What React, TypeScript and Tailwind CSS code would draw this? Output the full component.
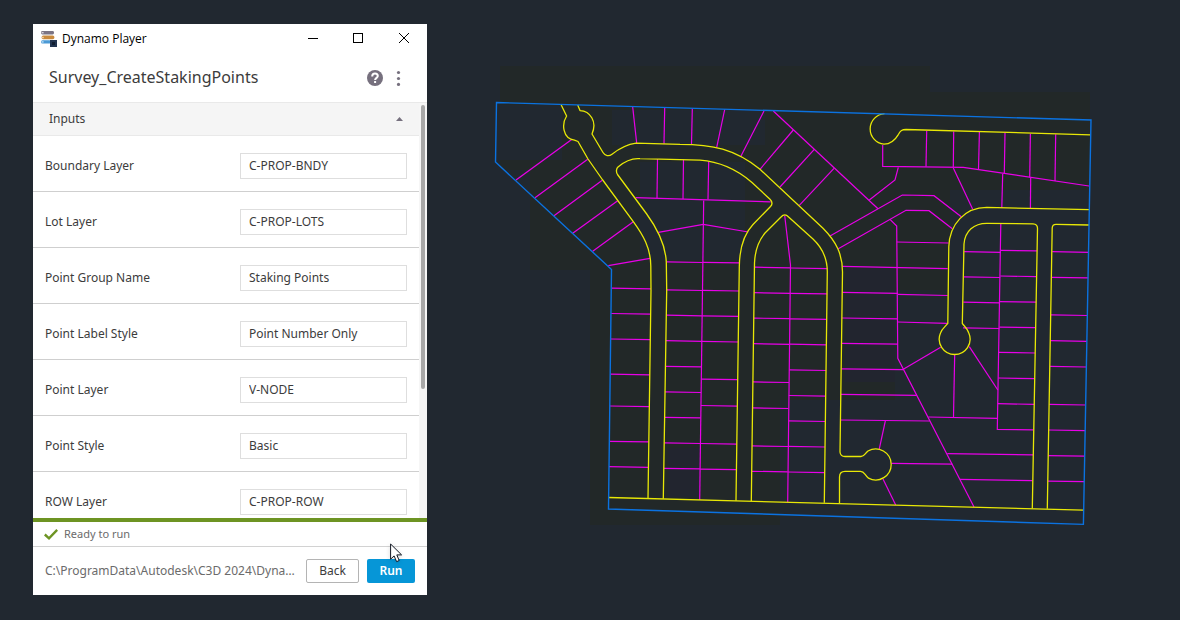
import { useState } from "react";

type Segment = [number, number, number, number];

const inputs = [
  { id: "boundary-layer", label: "Boundary Layer", value: "C-PROP-BNDY" },
  { id: "lot-layer", label: "Lot Layer", value: "C-PROP-LOTS" },
  { id: "point-group", label: "Point Group Name", value: "Staking Points" },
  { id: "label-style", label: "Point Label Style", value: "Point Number Only" },
  { id: "point-layer", label: "Point Layer", value: "V-NODE" },
  { id: "point-style", label: "Point Style", value: "Basic" },
  { id: "row-layer", label: "ROW Layer", value: "C-PROP-ROW" },
];

/* Lot rows: x of both sides at y = 290, lean of the block, and the y of each lot line. */
const lotRows: { left: number; right: number; lean: number; ys: number[] }[] = [
  { left: 611.5, right: 651, lean: 0.0142, ys: [288.5, 313.8, 339.3, 374.5, 406.3, 441.6, 467] },
  { left: 666.5, right: 702.5, lean: 0.0142, ys: [262.2, 290.2, 315.5, 341, 366.6, 392.2, 417.6, 443.2, 468.6] },
  { left: 702.5, right: 739, lean: 0.0142, ys: [262.6, 290.7, 316.1, 341.7, 379.4, 405.8, 443.8, 469.4] },
  { left: 754.3, right: 790.3, lean: 0.0142, ys: [267.5, 293, 318.4, 344, 382.2, 408.2, 446.2, 471.6] },
  { left: 790.3, right: 827.3, lean: 0.0142, ys: [268.3, 293.6, 319.1, 344.5, 370.2, 395.8, 421.2, 446.7, 472.3] },
  { left: 963.6, right: 1000, lean: 0.016, ys: [252, 277.2, 302.5, 328.2] },
  { left: 1000, right: 1036.5, lean: 0.019, ys: [250.6, 276.3, 301.9, 327.4, 352.7, 378.3, 404] },
  { left: 1051.5, right: 1088, lean: 0.019, ys: [252, 277.6, 315.2, 341, 366.7, 404.7, 430.3, 455.9, 481.4] },
];

const lotLines: Segment[] = [
  [571.7, 139.5, 516, 180],
  [587.7, 159.3, 535, 197.7],
  [602.3, 180.3, 554, 215.7],
  [617.7, 200.7, 572.7, 233.3],
  [633.3, 221.7, 592.7, 251.3],
  [650, 258.3, 608.3, 265.7],
  [632.7, 107, 636.7, 143.3],
  [664.7, 108, 664, 143.7],
  [692.3, 108.7, 691.5, 144.3],
  [724.7, 109.5, 716.7, 147.3],
  [764, 111, 741, 156],
  [773.3, 111, 878, 208.7],
  [793.3, 130, 760, 169.3],
  [814.3, 149.3, 780, 187],
  [834, 168.3, 799.3, 205.3],
  [657.5, 159, 657, 198.3],
  [683.5, 159.5, 683, 199],
  [708.7, 161.3, 708, 199.5],
  [635.7, 197.7, 770.7, 201.8],
  [703.7, 200.5, 699.7, 500],
  [926.7, 130.7, 926, 166.7],
  [953.7, 131.5, 953.3, 167.3],
  [979.4, 132, 978.5, 170],
  [1005, 133, 1004.3, 173.5],
  [1030.4, 133.7, 1029.7, 177.5],
  [1055.7, 134.3, 1055, 181],
  [953.3, 168, 972.7, 209.3],
  [1002.7, 173.7, 1001.8, 207.8],
  [1030.7, 177.5, 1030.4, 208.2],
  [896.7, 242, 948.7, 243],
  [842.3, 266.4, 947.7, 268.6],
  [842.2, 292.3, 898, 293.3],
  [898, 294.3, 947.7, 295.5],
  [841.8, 318, 897.5, 318.9],
  [898, 322, 947, 323.3],
  [841.4, 343.4, 898, 344.2],
  [841.1, 368.8, 903.3, 369.6],
  [840.8, 394.4, 916.7, 395.4],
  [840.5, 420, 929.7, 421],
  [903.3, 369.3, 940.7, 347.3],
  [954.7, 354, 953.5, 417],
  [928.3, 417, 997.3, 418.4],
  [885.4, 420.7, 879.3, 448.8],
  [891.3, 463.4, 952.3, 464.2],
  [883, 479, 895.7, 505],
  [947.3, 453.6, 1033, 454.9],
  [960, 479.3, 1032.5, 480.7],
  [969.3, 346.7, 997.8, 390],
];

const lotPaths = [
  "M658.3 232.3 703.3 224.3 748.3 232",
  "M784.7 215.5 790.5 265 787.7 502.3",
  "M830 236 902.3 195 934 195.7 961.3 216.7",
  "M838.3 248.7 906 210.3 929 210.7 952.3 228.7",
  "M869.3 200 895 180 898.3 167.3",
  "M882.7 145V166.3L963.3 167.3 1089 186",
  "M890 219.3 896.7 226 897.8 358.3 974 507",
  "M1000.8 223.7 997.3 429.3 1033.5 429.8",
];

const roadPaths = [
  "M561 104.5 566.6 116C561.5 124 562.5 138.5 574.5 140.2L578 141.5 588 159 602.7 180 633.3 221.7C643 235 650.7 248 650.8 266L651 290 648 498.5",
  "M577.7 105 580 110.6C590 111 597.5 121.5 592 134L603 152.5C605 156 609 156.6 612 154.2 620 148 627 144.5 636 143.2L680 144.3C712 144.3 735 149 760 169.3L823 228.3C836 241.5 842.5 254 842.5 272L840 452C840.3 455 842 456.5 845 456.5H861C864.5 456.5 864.5 454 868 451A15.5 15.5 0 1 1 868.5 478.2C864.5 475 864.5 471.3 860.5 471.3H845C841.5 471.3 839.6 473 839.5 477V503",
  "M617.5 174.5C615.8 172 616.3 168.5 618 167 625 161 632 158 640 158.7L700 160.2C722 161.8 738 170.5 752 182.5L770 199.3C772.5 201.8 772.5 204.3 770.5 206.5L753 224.5C744 234 739.5 249 739.3 266.7L736 500.7M617.5 174.5 646.7 214C658 229.5 665.5 246 666.3 262L666.7 290 663.3 498.8",
  "M751.3 501.2 754.5 263C755 250 758 241.5 765 233L781 217C783.5 214.2 786 214.2 788.6 217L813 239C822.5 248 827.3 259 827.3 271.7L824.3 502.7",
  "M884.5 113.7A15.3 15.3 0 0 0 884 144.2C892 144 896 138.5 898.5 134.3 900.5 130.5 902 129.5 906 129.5L1090.5 134.8",
  "M1089.5 209.7 986.7 207.4C965 207.5 949.5 224 948.8 246.7L947.8 323.3C945.5 326.5 942 328.5 940.5 333A15.4 15.4 0 1 0 968.8 333C967.5 328.5 964 326 962.3 323.3L964 244C965 231 974 223.3 986.7 223.3L1033 223.8C1036.5 224 1037.6 225.5 1037.5 228.5L1032.3 508.4",
  "M1089 225 1056 224.3C1053.5 224.3 1052.3 225.5 1052.2 228L1047.3 508.8",
  "M608.7 497.5 1083.5 510.2",
];

function SiteMap() {
  return (
    <svg
      viewBox="427 0 753 620"
      role="img"
      aria-label="Subdivision plan with boundary, lots and roads"
      className="h-full w-full"
      fill="none"
    >
      <g fill="#222828">
        <path d="M500 66H930V92H1090V190H950V290H895V400H780V525H590V270H530V170H500Z" />
      </g>
      <g fill="#212830">
        <path d="M500 105H562V160H500ZM612 110H765V145H612ZM640 162H745V260H640Z" />
      </g>
      <g fill="#22252f">
        <path d="M845 268H895V382H845ZM668 448H700V497H668Z" />
      </g>
      <g stroke="#e800e8" strokeWidth="1.2">
        {lotLines.map(([x1, y1, x2, y2], i) => (
          <line key={i} x1={x1} y1={y1} x2={x2} y2={y2} />
        ))}
        {lotRows.map((row, r) =>
          row.ys.map((y) => {
            const shift = (y - 290) * row.lean;
            return <line key={`${r}-${y}`} x1={row.left - shift} y1={y - 0.3} x2={row.right - shift} y2={y + 0.3} />;
          }),
        )}
        {lotPaths.map((d) => (
          <path key={d} d={d} />
        ))}
      </g>
      <g stroke="#e8e806" strokeWidth="1.3" strokeLinejoin="round">
        {roadPaths.map((d) => (
          <path key={d} d={d} />
        ))}
      </g>
      <path
        d="M496.5 102.5 1091 120 1083.4 524.4 608.5 509 611.5 269.5 495.5 162Z"
        stroke="#0b72e0"
        strokeWidth="1.4"
      />
    </svg>
  );
}

function AppIcon() {
  return (
    <svg viewBox="0 0 16 16" className="size-4" aria-hidden="true">
      <rect x="0" y="0" width="13" height="3.4" rx="1.4" fill="#7b7484" />
      <rect x="0.6" y="4.6" width="12.8" height="3.6" rx="1.6" fill="#c98a3e" />
      <rect x="0" y="9.2" width="10" height="3.4" rx="1.5" fill="#4b9ad6" />
      <rect x="0.6" y="1" width="2" height="1.4" fill="#d8d5dc" />
      <rect x="0.8" y="5.8" width="2" height="1.4" fill="#f4d3a4" />
      <rect x="0.6" y="10.2" width="2" height="1.4" fill="#bfe0f7" />
      <rect x="9" y="9" width="7" height="7" fill="#22344f" />
      <rect x="11" y="11" width="3" height="3" fill="#101d30" />
    </svg>
  );
}

export default function App() {
  const [open, setOpen] = useState(true);

  return (
    <main className="flex h-screen bg-[#212830] font-['Noto_Sans',sans-serif] text-[#3c3c3c]">
      <div className="shrink-0 pt-6 pb-[25px] pl-[33px]">
        <section aria-label="Dynamo Player" className="relative flex h-full w-[394px] flex-col bg-white">
          <div className="flex h-[30px] shrink-0 items-center pl-2 text-black">
            <AppIcon />
            <span className="ml-[5px] flex-1 font-['Open_Sans',sans-serif] text-xs">Dynamo Player</span>
            <button aria-label="Minimize" className="grid h-7 w-11 place-items-center self-start">
              <svg viewBox="0 0 10 10" className="size-[10px]" stroke="currentColor" shapeRendering="crispEdges">
                <path d="M0 5.5H10" />
              </svg>
            </button>
            <button aria-label="Maximize" className="grid h-7 w-[46px] place-items-center self-start">
              <svg viewBox="0 0 10 10" className="size-[10px]" stroke="currentColor" fill="none" shapeRendering="crispEdges">
                <rect x="0.5" y="0.5" width="9" height="9" />
              </svg>
            </button>
            <button aria-label="Close" className="grid h-7 w-[46px] place-items-center self-start">
              <svg viewBox="0 0 10 10" className="size-[10px]" stroke="currentColor">
                <path d="M0 0 10 10M10 0 0 10" />
              </svg>
            </button>
          </div>

          <header className="flex h-12 shrink-0 items-center pr-[25px] pl-4">
            <h1 className="flex-1 pb-0.5 text-base">Survey_CreateStakingPoints</h1>
            <button aria-label="Help" className="mr-3">
              <svg viewBox="0 0 16 16" className="size-4" fill="none">
                <circle cx="8" cy="8" r="8" fill="#76707e" />
                <path
                  d="M5.2 6.4C5.2 4.5 6.4 3.5 8 3.5S10.8 4.5 10.8 6C10.8 7.8 8.1 7.9 8.1 10"
                  stroke="#fff"
                  strokeWidth="2"
                />
                <rect x="7.1" y="11" width="2" height="2" fill="#fff" />
              </svg>
            </button>
            <button aria-label="More options" className="w-[7px]">
              <svg viewBox="0 0 7 16" className="h-4 w-[7px]" fill="#76707e">
                <circle cx="3.5" cy="2.5" r="1.6" />
                <circle cx="3.5" cy="8.5" r="1.6" />
                <circle cx="3.5" cy="14.4" r="1.6" />
              </svg>
            </button>
          </header>

          <div className="flex min-h-0 flex-1">
            <div className="flex-1 overflow-y-auto [scrollbar-width:none]">
              <button
                aria-expanded={open}
                onClick={() => setOpen(!open)}
                className="flex h-[34px] w-full items-center justify-between border-y border-[#e9e9e9] bg-[#f5f5f5] px-4 text-xs"
              >
                Inputs
                <svg viewBox="0 0 7 4" className="h-1 w-[7px]" fill="#76707e">
                  <path d="M0 4 3.5 0 7 4Z" />
                </svg>
              </button>
              {open &&
                inputs.map(({ id, label, value }) => (
                  <div key={id} className="flex h-14 items-center border-b border-[#cfcfcf] px-3 pt-1">
                    <label htmlFor={id} className="flex-1 text-xs">
                      {label}
                    </label>
                    <input
                      id={id}
                      defaultValue={value}
                      className="h-[26px] w-[167px] border border-[#dedede] bg-white px-2 text-xs outline-none"
                    />
                  </div>
                ))}
            </div>
            <div className="w-2 border-t border-[#e9e9e9] bg-[#f6f6f6] px-[2px] pt-[2px]">
              <div className="h-[284px] w-1 rounded-full bg-[#a8a8a8]" />
            </div>
          </div>

          <div className="h-1 shrink-0 bg-[#6d9423]" />
          <p className="flex h-[25px] shrink-0 items-center border-b border-[#d2d2d2] pl-[11px] text-[11px] text-[#6b6b6b]">
            <svg viewBox="0 0 14 11" className="mr-[6px] h-[11px] w-[14px]" fill="none" stroke="#6d9423" strokeWidth="2.4">
              <path d="M0.8 5.5 5 9.3 13.2 0.9" />
            </svg>
            Ready to run
          </p>
          <footer className="flex h-12 shrink-0 items-center px-3 text-xs">
            <span className="flex-1 whitespace-nowrap text-[#6b6b6b]">{"C:\\ProgramData\\Autodesk\\C3D 2024\\Dyna…"}</span>
            <button className="h-6 w-[53px] rounded-[2px] border border-[#b4b4b4] bg-white">Back</button>
            <button className="ml-2 h-6 w-12 rounded-[2px] bg-[#0696d7] font-semibold text-white">Run</button>
          </footer>

          <svg viewBox="0 0 13 20" className="absolute right-6 bottom-8 h-5 w-[13px] drop-shadow-sm" aria-hidden="true">
            <path
              d="M0.6 1V16.2L4.1 12.9 6.6 18.6 9.2 17.5 6.8 11.9H11.6Z"
              fill="#fff"
              stroke="#111722"
            />
          </svg>
        </section>
      </div>
      <div className="min-w-0 flex-1">
        <SiteMap />
      </div>
    </main>
  );
}
